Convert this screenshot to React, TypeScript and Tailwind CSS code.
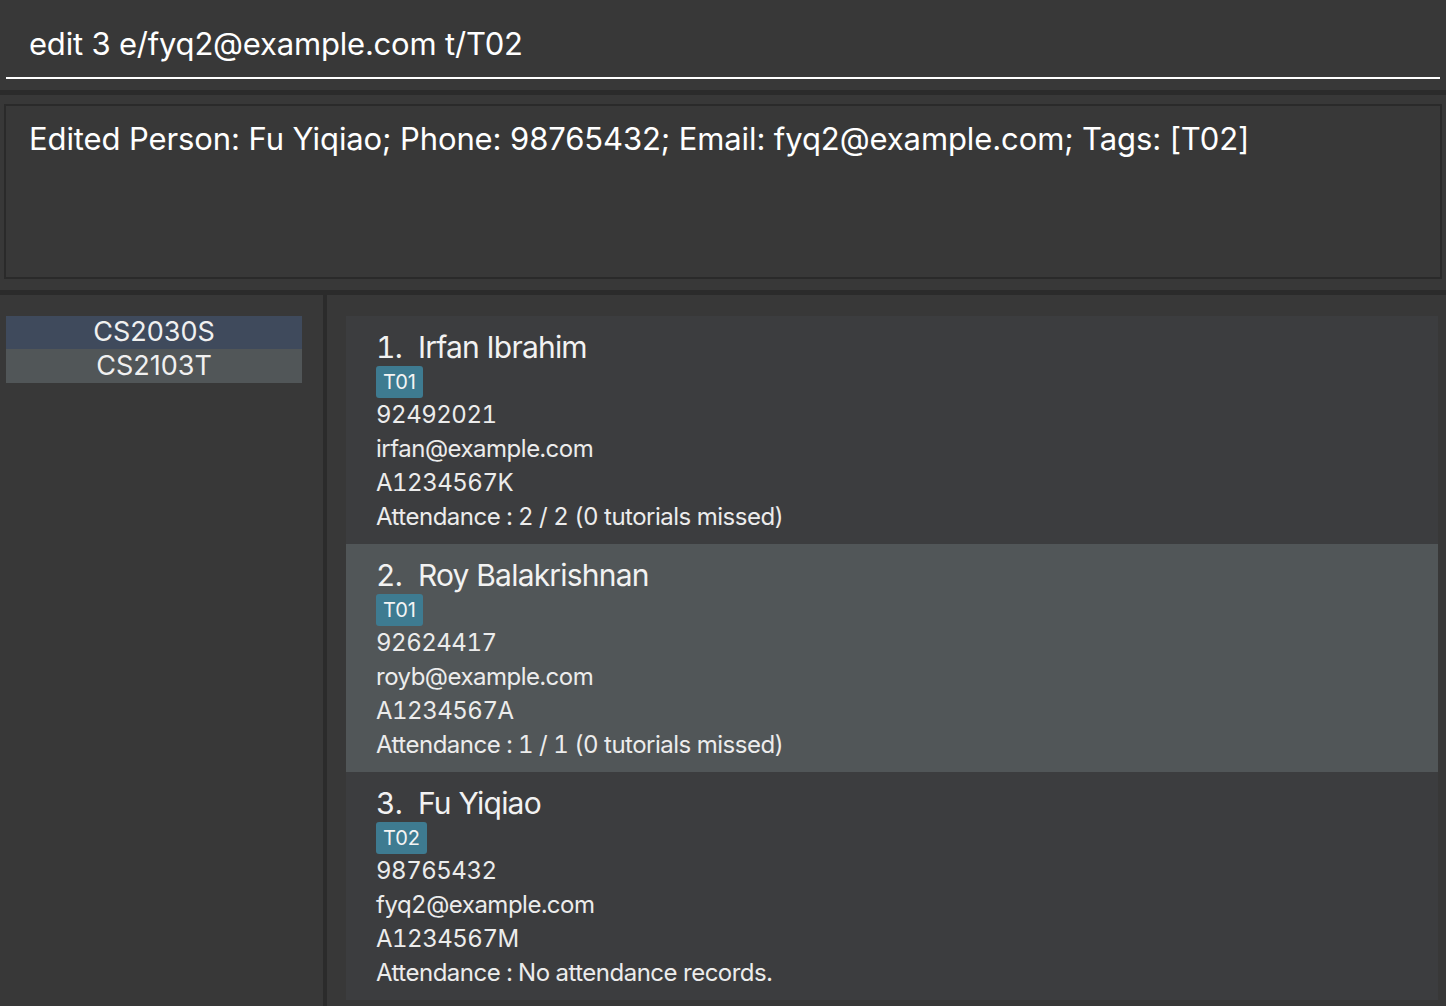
const persons = [
  {
    name: 'Irfan Ibrahim',
    tag: 'T01',
    phone: '92492021',
    email: 'irfan@example.com',
    id: 'A1234567K',
    attendance: '2 / 2 (0 tutorials missed)',
  },
  {
    name: 'Roy Balakrishnan',
    tag: 'T01',
    phone: '92624417',
    email: 'royb@example.com',
    id: 'A1234567A',
    attendance: '1 / 1 (0 tutorials missed)',
  },
  {
    name: 'Fu Yiqiao',
    tag: 'T02',
    phone: '98765432',
    email: 'fyq2@example.com',
    id: 'A1234567M',
    attendance: 'No attendance records.',
  },
];

function PersonCard({ index, p, selected }: { index: number; p: (typeof persons)[number]; selected: boolean }) {
  return (
    <div className={`h-[228px] pl-[30px] pt-[14px] ${selected ? 'bg-[#515658]' : 'bg-[#3c3d3f]'}`}>
      <div className="flex h-[34px] text-[30px] leading-[34px] tracking-[-0.8px] text-[#f2f2f2]">
        <span className="tabular-nums">{index}.</span>
        <span className="ml-[16px]">{p.name}</span>
      </div>
      <div className="mt-[2px] flex h-[32px]">
        <span className="flex items-center rounded-[3px] bg-[#3e7b91] px-[7px] text-[20px] text-[#f4f4f4]">{p.tag}</span>
      </div>
      <div className="text-[24px] leading-[34px] tracking-[-0.5px] text-[#ececec] tabular-nums">
        <div>{p.phone}</div>
        <div>{p.email}</div>
        <div>{p.id}</div>
        <div>Attendance : {p.attendance}</div>
      </div>
    </div>
  );
}

export default function App() {
  return (
    <div
      className="flex h-[1006px] w-[1446px] flex-col overflow-hidden bg-[#383838]"
      style={{ fontFamily: 'Inter, "Noto Sans", sans-serif' }}
    >
      {/* command box */}
      <div className="h-[90px] px-[6px] pt-[22px]">
        <div className="h-[57px] border-b-2 border-white pl-[23px] text-[31px] leading-[44px] tracking-[-0.2px] text-white">
          edit 3 e/fyq2@example.com t/T02
        </div>
      </div>
      <div className="h-[5px] bg-[#2b2b2b]" />

      {/* result display */}
      <div className="h-[195px] px-[4px] pt-[9px]">
        <div className="h-[175px] border-2 border-[#2a2a2a] pl-[23px] pt-[14px] text-[31px] leading-[38px] tracking-[-0.1px] text-white">
          Edited Person: Fu Yiqiao; Phone: 98765432; Email: fyq2@example.com; Tags: [T02]
        </div>
      </div>
      <div className="h-[5px] bg-[#2b2b2b]" />

      {/* main area */}
      <div className="flex flex-1">
        <div className="w-[323px] pl-[6px] pr-[21px] pt-[21px]">
          <div className="flex h-[33px] items-center justify-center bg-[#3f4a5c] text-[27px] text-[#f0f0f0]">CS2030S</div>
          <div className="flex h-[34px] items-center justify-center bg-[#515658] text-[27px] text-[#f0f0f0]">CS2103T</div>
        </div>
        <div className="w-[4px] bg-[#2b2b2b]" />
        <div className="flex-1 pl-[19px] pr-[8px] pt-[21px]">
          {persons.map((p, i) => (
            <PersonCard key={p.name} index={i + 1} p={p} selected={i === 1} />
          ))}
        </div>
      </div>
    </div>
  );
}
